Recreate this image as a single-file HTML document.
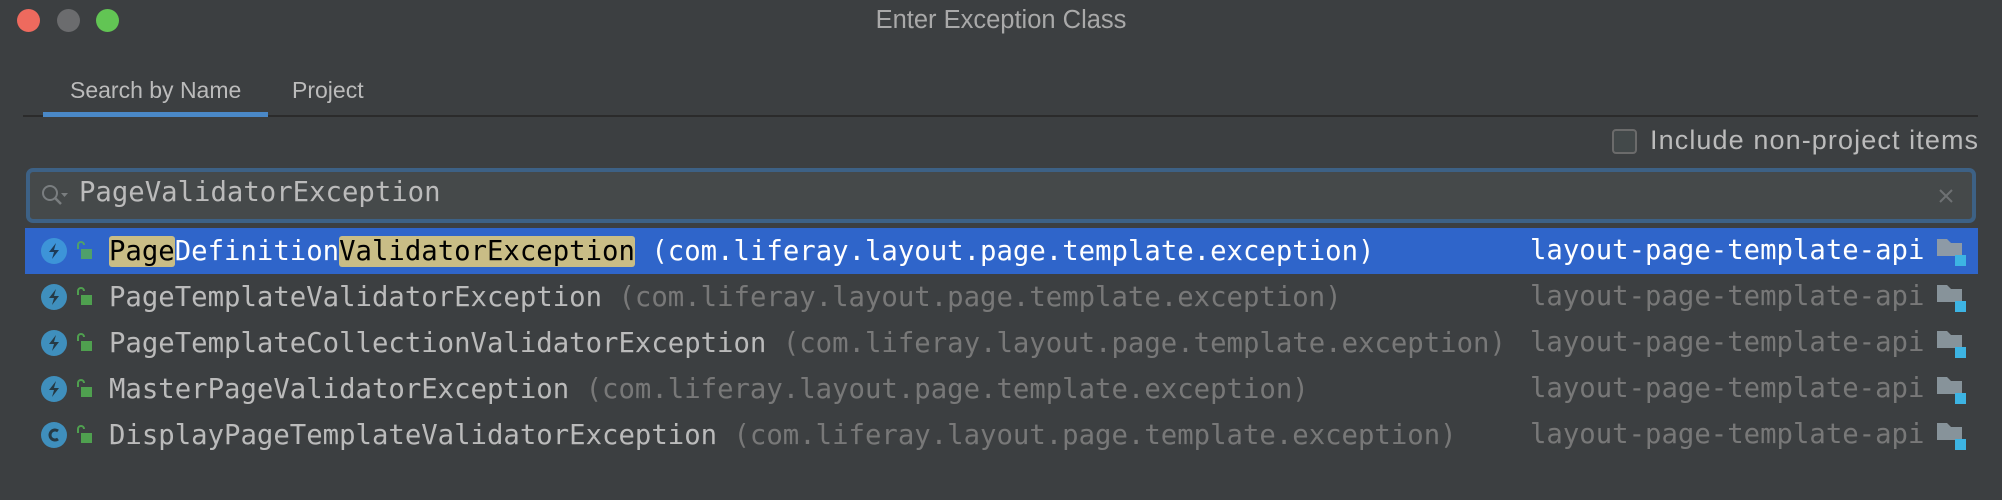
<!DOCTYPE html>
<html><head><meta charset="utf-8"><style>
*{margin:0;padding:0;box-sizing:border-box}
body{width:2002px;height:500px;background:#3c3f41;position:relative;overflow:hidden;font-family:"Liberation Sans","DejaVu Sans",sans-serif}
.dot{position:absolute;top:9px;width:23px;height:23px;border-radius:50%}
.abs{position:absolute;white-space:pre}
.mono{font-family:"DejaVu Sans Mono","Liberation Mono",monospace;font-size:27.3px}
.row{position:absolute;left:25px;width:1953px;height:46px}
.ic{position:absolute;left:16px;top:10px;width:26px;height:26px;border-radius:50%;background:#3f8fbd}
.lock{position:absolute;left:50px;top:13px}
.nm{position:absolute;left:84px;top:8px;color:#bbbbbb}
.pk{color:#787878}
.mod{position:absolute;left:1505px;top:7px;color:#787878}
.fold{position:absolute;left:1912px;top:11px}
.hl{background:#c9bd86;color:#000;border-radius:3px}
</style></head><body>
<div class="dot" style="left:17px;background:#ee6a5e"></div>
<div class="dot" style="left:57px;background:#6b6c6e"></div>
<div class="dot" style="left:96px;background:#62c554"></div>
<div class="abs" style="left:0;width:2002px;text-align:center;top:6px;font-size:25.5px;color:#a9a9a9">Enter Exception Class</div>

<div class="abs" style="left:70px;top:77px;font-size:23px;color:#bbbbbb">Search by Name</div>
<div class="abs" style="left:292px;top:77px;font-size:23px;color:#bbbbbb">Project</div>
<div class="abs" style="left:23px;top:115px;width:1955px;height:2px;background:#2b2b2b"></div>
<div class="abs" style="left:43px;top:112px;width:225px;height:5px;background:#4a88c7"></div>

<div class="abs" style="left:1612px;top:129px;width:25px;height:25px;border:2px solid #6b6b6b;border-radius:4px;background:#43494a"></div>
<div class="abs" style="left:1650px;top:125px;font-size:27px;letter-spacing:1.1px;color:#bbbbbb">Include non-project items</div>

<div class="abs" style="left:26px;top:168px;width:1950px;height:55px;border:4px solid #3d6185;border-radius:7px;background:#45494a"></div>
<svg class="abs" style="left:40px;top:180px" width="30" height="30" viewBox="0 0 30 30"><circle cx="10" cy="13" r="7" fill="none" stroke="#7a7e80" stroke-width="2"/><line x1="15" y1="18" x2="21" y2="24" stroke="#7a7e80" stroke-width="2.5"/><path d="M21 13h7l-3.5 4z" fill="#7a7e80"/></svg>
<div class="abs mono" style="left:79px;top:177px;color:#bbbbbb">PageValidatorException</div>
<svg class="abs" style="left:1937px;top:187px" width="18" height="18"><path d="M3 3L15 15M15 3L3 15" stroke="#6e7173" stroke-width="2"/></svg>

<div class="row" style="top:228px;background:#2f65ca">
 <div class="ic" style="background:#3d94d8"><svg width="26" height="26"><path d="M15 5L8 14h5l-2 7 7-9h-5z" fill="#1d3b57"/></svg></div>
 <svg class="lock" width="20" height="20"><path d="M3 8V4a3 3 0 0 1 6 0" fill="none" stroke="#4fa06a" stroke-width="2"/><rect x="6" y="8" width="11" height="10" fill="#4fa06a"/></svg>
 <div class="nm mono" style="color:#fff"><span class="hl">Page</span>Definition<span class="hl">ValidatorException</span> (com.liferay.layout.page.template.exception)</div>
 <div class="mod mono" style="color:#fff">layout-page-template-api</div>
 <svg class="fold" width="30" height="30"><path d="M0 0h10l4 4h11v13H0z" fill="#8d9aa6"/><rect x="18" y="16" width="11" height="11" fill="#3db4e3"/></svg>
</div>

<div class="row" style="top:274px">
 <div class="ic"><svg width="26" height="26"><path d="M15 5L8 14h5l-2 7 7-9h-5z" fill="#263a45"/></svg></div>
 <svg class="lock" width="20" height="20"><path d="M3 8V4a3 3 0 0 1 6 0" fill="none" stroke="#4fa04f" stroke-width="2"/><rect x="6" y="8" width="11" height="10" fill="#4fa04f"/></svg>
 <div class="nm mono">PageTemplateValidatorException <span class="pk">(com.liferay.layout.page.template.exception)</span></div>
 <div class="mod mono">layout-page-template-api</div>
 <svg class="fold" width="30" height="30"><path d="M0 0h10l4 4h11v13H0z" fill="#87939a"/><rect x="18" y="16" width="11" height="11" fill="#3db4e3"/></svg>
</div>
<div class="row" style="top:320px">
 <div class="ic"><svg width="26" height="26"><path d="M15 5L8 14h5l-2 7 7-9h-5z" fill="#263a45"/></svg></div>
 <svg class="lock" width="20" height="20"><path d="M3 8V4a3 3 0 0 1 6 0" fill="none" stroke="#4fa04f" stroke-width="2"/><rect x="6" y="8" width="11" height="10" fill="#4fa04f"/></svg>
 <div class="nm mono">PageTemplateCollectionValidatorException <span class="pk">(com.liferay.layout.page.template.exception)</span></div>
 <div class="mod mono">layout-page-template-api</div>
 <svg class="fold" width="30" height="30"><path d="M0 0h10l4 4h11v13H0z" fill="#87939a"/><rect x="18" y="16" width="11" height="11" fill="#3db4e3"/></svg>
</div>
<div class="row" style="top:366px">
 <div class="ic"><svg width="26" height="26"><path d="M15 5L8 14h5l-2 7 7-9h-5z" fill="#263a45"/></svg></div>
 <svg class="lock" width="20" height="20"><path d="M3 8V4a3 3 0 0 1 6 0" fill="none" stroke="#4fa04f" stroke-width="2"/><rect x="6" y="8" width="11" height="10" fill="#4fa04f"/></svg>
 <div class="nm mono">MasterPageValidatorException <span class="pk">(com.liferay.layout.page.template.exception)</span></div>
 <div class="mod mono">layout-page-template-api</div>
 <svg class="fold" width="30" height="30"><path d="M0 0h10l4 4h11v13H0z" fill="#87939a"/><rect x="18" y="16" width="11" height="11" fill="#3db4e3"/></svg>
</div>
<div class="row" style="top:412px">
 <div class="ic"><svg width="26" height="26"><path d="M17 9a5 5 0 1 0 0 8" fill="none" stroke="#263a45" stroke-width="3"/></svg></div>
 <svg class="lock" width="20" height="20"><path d="M3 8V4a3 3 0 0 1 6 0" fill="none" stroke="#4fa04f" stroke-width="2"/><rect x="6" y="8" width="11" height="10" fill="#4fa04f"/></svg>
 <div class="nm mono">DisplayPageTemplateValidatorException <span class="pk">(com.liferay.layout.page.template.exception)</span></div>
 <div class="mod mono">layout-page-template-api</div>
 <svg class="fold" width="30" height="30"><path d="M0 0h10l4 4h11v13H0z" fill="#87939a"/><rect x="18" y="16" width="11" height="11" fill="#3db4e3"/></svg>
</div>
</body></html>
